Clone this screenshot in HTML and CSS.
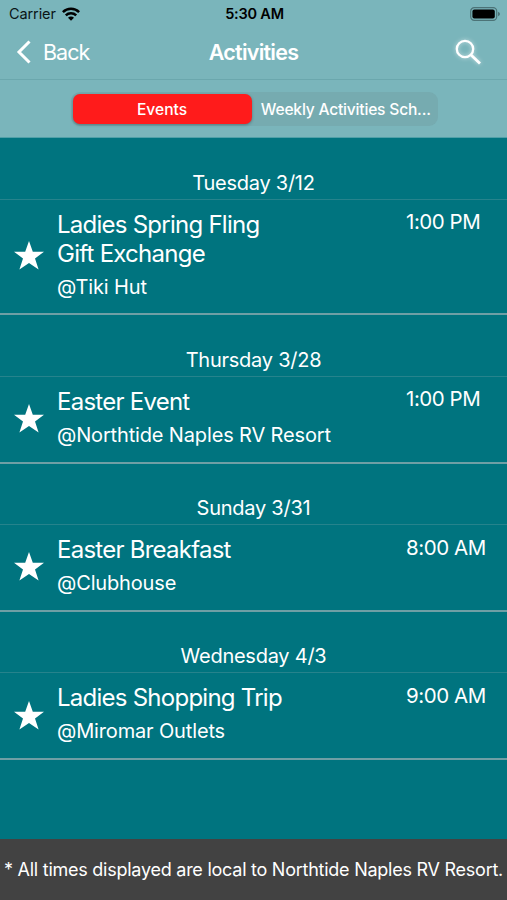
FILE: index.html
```html
<!DOCTYPE html>
<html lang="en">
<head>
    <meta charset="UTF-8">
    <meta name="viewport" content="width=device-width, initial-scale=1.0">
    <title>Activities</title>
    <link rel="stylesheet" href="styles.css">
</head>
<body>
    <svg class="sprite" width="0" height="0">
        <symbol id="star" viewBox="0 0 30 29">
            <path d="M15 0L18.8 10.7H30L21 17.5L24.6 28.5L15 21.9L5.4 28.5L9 17.5L0 10.7H11.2Z" fill="#fff"/>
        </symbol>
    </svg>

    <div class="screen">
        <header class="header">
            <div class="status-bar">
                <div class="carrier">
                    <span>Carrier</span>
                    <svg width="18" height="14" viewBox="0 0 18 14">
                        <g fill="none" stroke="#000" stroke-width="2.5">
                            <path d="M0.9 5.2A11.5 11.5 0 0 1 17.1 5.2"/>
                            <path d="M3.8 8.4A7.4 7.4 0 0 1 14.2 8.4"/>
                        </g>
                        <path d="M9 13.8L6 10.7A4.2 4.2 0 0 1 12 10.7Z"/>
                    </svg>
                </div>
                <div class="clock">5:30 AM</div>
                <svg class="battery" width="30" height="14" viewBox="0 0 30 14">
                    <rect x="0.7" y="0.7" width="26" height="12.6" rx="3.6" fill="none" stroke="#4c7377" stroke-width="1.2"/>
                    <rect x="2.4" y="2.4" width="22.4" height="9.2" rx="2"/>
                    <path d="M28 4.7Q30 5.4 30 7T28 9.3Z" fill="#4c7377"/>
                </svg>
            </div>

            <nav class="nav-bar">
                <a class="back">
                    <svg width="15" height="24" viewBox="0 0 15 24">
                        <path d="M13.5 1.5L3 12L13.5 22.5" fill="none" stroke="#fff" stroke-width="3"/>
                    </svg>
                    <span>Back</span>
                </a>
                <h1>Activities</h1>
                <svg class="search" width="26" height="26" viewBox="0 0 26 26">
                    <g fill="none" stroke="#fff" stroke-width="2.3">
                        <circle cx="10" cy="10" r="8.2"/>
                        <path d="M15.8 15.8L25 24.6" stroke-width="2.8"/>
                    </g>
                </svg>
            </nav>

            <div class="tabs">
                <div class="segmented">
                    <div class="segment active">Events</div>
                    <div class="segment">Weekly Activities Sch...</div>
                </div>
            </div>
        </header>

        <main class="list">
            <section class="day">
                <h2>Tuesday 3/12</h2>
                <div class="event">
                    <svg class="star" width="30" height="29"><use href="#star"/></svg>
                    <div class="info">
                        <div class="title">Ladies Spring Fling<br>Gift Exchange</div>
                        <div class="place">@Tiki Hut</div>
                    </div>
                    <div class="time">1:00 PM</div>
                </div>
            </section>

            <section class="day">
                <h2>Thursday 3/28</h2>
                <div class="event">
                    <svg class="star" width="30" height="29"><use href="#star"/></svg>
                    <div class="info">
                        <div class="title">Easter Event</div>
                        <div class="place">@Northtide Naples RV Resort</div>
                    </div>
                    <div class="time">1:00 PM</div>
                </div>
            </section>

            <section class="day">
                <h2>Sunday 3/31</h2>
                <div class="event">
                    <svg class="star" width="30" height="29"><use href="#star"/></svg>
                    <div class="info">
                        <div class="title">Easter Breakfast</div>
                        <div class="place">@Clubhouse</div>
                    </div>
                    <div class="time">8:00 AM</div>
                </div>
            </section>

            <section class="day">
                <h2>Wednesday 4/3</h2>
                <div class="event">
                    <svg class="star" width="30" height="29"><use href="#star"/></svg>
                    <div class="info">
                        <div class="title">Ladies Shopping Trip</div>
                        <div class="place">@Miromar Outlets</div>
                    </div>
                    <div class="time">9:00 AM</div>
                </div>
            </section>
        </main>

        <footer class="footer">* All times displayed are local to Northtide Naples RV Resort.</footer>
    </div>
</body>
</html>
```

FILE: styles.css
```css
* {
    box-sizing: border-box;
}
body {
    margin: 0;
    font-family: Inter, "Liberation Sans", sans-serif;
    color: #fff;
    background: #00747f;
}
.sprite {
    position: absolute;
}
.screen {
    height: 900px;
    display: flex;
    flex-direction: column;
    overflow: hidden;
}
.header {
    height: 138px;
    background: #7ab5bb;
    border-bottom: 1px solid #50a0a8;
}
.status-bar {
    height: 27px;
    padding: 0 7px 0 9px;
    display: grid;
    grid-template-columns: 1fr auto 1fr;
    align-items: center;
    color: #0b1516;
    font-size: 14.5px;
}
.carrier {
    display: flex;
    align-items: center;
    gap: 6px;
    letter-spacing: -0.1px;
}
.clock {
    font-weight: 600;
    color: #000;
    letter-spacing: -0.2px;
}
.battery {
    justify-self: end;
}
.nav-bar {
    height: 53px;
    padding: 0 16px 2px;
    display: grid;
    grid-template-columns: 1fr auto 1fr;
    align-items: center;
    border-bottom: 1px solid #6ba7ad;
}
.back {
    display: flex;
    align-items: center;
    gap: 12px;
    font-size: 21.5px;
    letter-spacing: -1px;
}
.nav-bar h1 {
    margin: 0;
    font-size: 21.5px;
    font-weight: 600;
    letter-spacing: -0.75px;
}
.search {
    justify-self: end;
    margin-right: 10px;
    filter: drop-shadow(0 0 2px rgba(255, 255, 255, 0.6));
}
.tabs {
    padding: 12px 69px 0 70.5px;
}
.segmented {
    height: 34px;
    padding: 2px;
    display: grid;
    grid-template-columns: 179px 1fr;
    border-radius: 9px;
    background: #76abb0;
}
.segment {
    display: flex;
    align-items: center;
    justify-content: center;
    padding: 1px 0 0 4px;
    font-size: 15.6px;
    font-weight: 500;
    letter-spacing: -0.2px;
    white-space: nowrap;
}
.segment.active {
    padding-left: 0;
    border-radius: 7px;
    background: #ff1b1b;
    box-shadow: 0 1px 3px rgba(0, 0, 0, 0.3);
    letter-spacing: 0;
}
.list {
    flex: 1;
}
.day h2 {
    height: 61.5px;
    margin: 0;
    padding-top: 31.5px;
    border-bottom: 1px solid #26838c;
    font-size: 20px;
    font-weight: 400;
    line-height: 26px;
    letter-spacing: -0.25px;
    text-align: center;
}
.event {
    padding: 10px 0 14.3px 14px;
    display: flex;
    align-items: center;
    border-bottom: 2px solid #6f9fa5;
}
.star {
    margin-top: 3px;
}
.info {
    flex: 1;
    margin-left: 13px;
}
.title {
    font-size: 24px;
    line-height: 29px;
    letter-spacing: -0.75px;
}
.place {
    margin-top: 7px;
    margin-bottom: 0.5px;
    font-size: 20px;
    line-height: 24px;
    letter-spacing: -0.15px;
}
.time {
    width: 101px;
    margin-top: -0.5px;
    align-self: flex-start;
    font-size: 20.5px;
    line-height: 25px;
    letter-spacing: -0.45px;
}
.footer {
    height: 61px;
    display: flex;
    align-items: center;
    justify-content: center;
    font-size: 18px;
    letter-spacing: -0.25px;
    white-space: nowrap;
    background: #424242;
}
```
